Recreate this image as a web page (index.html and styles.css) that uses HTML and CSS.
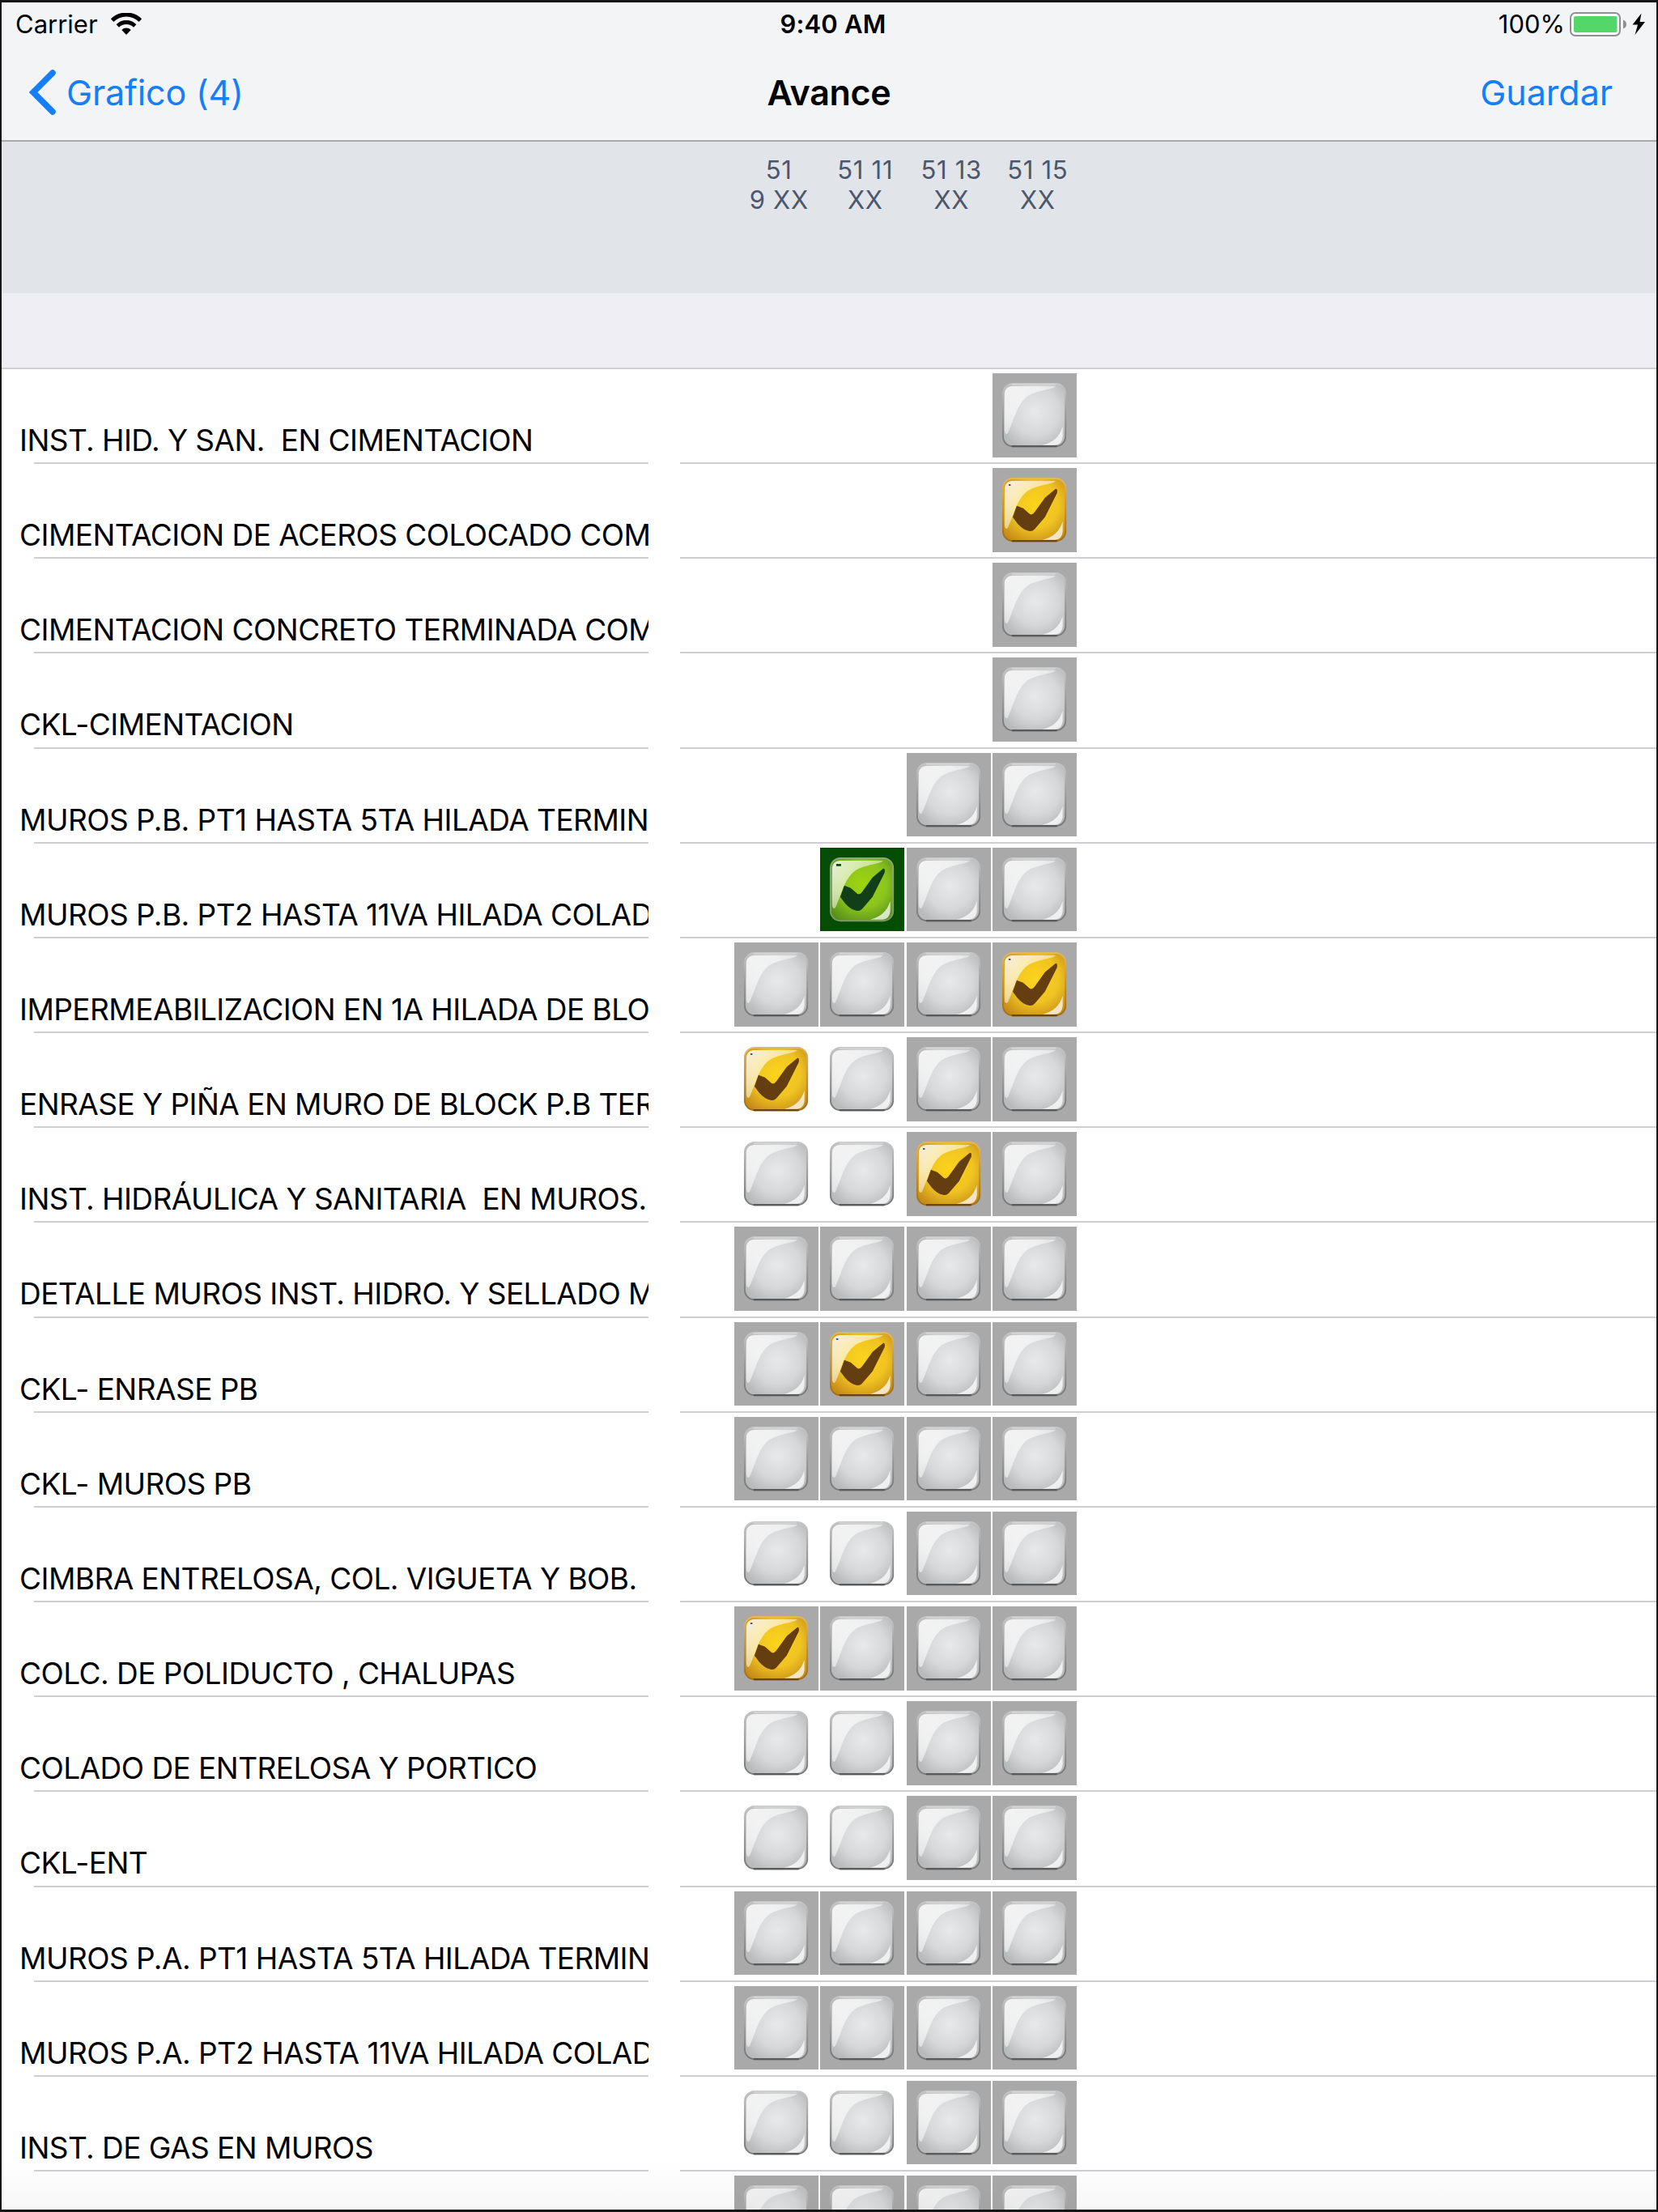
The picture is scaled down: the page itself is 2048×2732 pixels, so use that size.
FILE: index.html
```html
<!DOCTYPE html>
<html lang="es">
<head>
    <meta charset="UTF-8">
    <meta name="viewport" content="width=device-width, initial-scale=1.0">
    <title>Avance</title>
    <link rel="stylesheet" href="styles.css">
</head>
<body>
    <svg class="defs" width="0" height="0">
        <defs>
            <radialGradient id="gris" cx="0.52" cy="0.45" r="0.62">
                <stop offset="0" stop-color="#e7e9eb"/>
                <stop offset="0.6" stop-color="#d6d7d8"/>
                <stop offset="1" stop-color="#b9babb"/>
            </radialGradient>
            <radialGradient id="amarillo" cx="0.52" cy="0.42" r="0.68">
                <stop offset="0" stop-color="#fbd41c"/>
                <stop offset="0.55" stop-color="#f0c322"/>
                <stop offset="1" stop-color="#c48a18"/>
            </radialGradient>
            <radialGradient id="verde" cx="0.52" cy="0.42" r="0.68">
                <stop offset="0" stop-color="#9ed40f"/>
                <stop offset="0.55" stop-color="#8cc41e"/>
                <stop offset="1" stop-color="#558f18"/>
            </radialGradient>
            <linearGradient id="brillo" x1="0" y1="0.1" x2="0.6" y2="0.6">
                <stop offset="0" stop-color="#fff" stop-opacity="0.82"/>
                <stop offset="1" stop-color="#fff" stop-opacity="0.45"/>
            </linearGradient>
            <linearGradient id="borde" x1="0" y1="0" x2="0" y2="1">
                <stop offset="0" stop-color="#c6c6c6"/>
                <stop offset="0.5" stop-color="#9a9a9a"/>
                <stop offset="1" stop-color="#777"/>
            </linearGradient>
            <linearGradient id="bordeAmarillo" x1="0" y1="0" x2="0" y2="1">
                <stop offset="0" stop-color="#e0b860"/>
                <stop offset="1" stop-color="#a06c14"/>
            </linearGradient>
            <linearGradient id="bordeVerde" x1="0" y1="0" x2="0" y2="1">
                <stop offset="0" stop-color="#8fa878"/>
                <stop offset="1" stop-color="#7c9a60"/>
            </linearGradient>
            <g id="reflejos">
                <path d="M24 16 H78 C76 20 58 20 44 28 C31 37 27 56 20 72 C18 77 15 76 15 70 V24 Q16 17 24 16 Z" fill="url(#brillo)"/>
                <path d="M62 89 C74 86 83 80 87 66 V79 Q86 88 78 89 Z" fill="#fff" fill-opacity="0.75"/>
            </g>
            <rect id="contorno" x="13" y="13" width="77.500" height="77.500" rx="12"/>
            <path id="palomita" d="M30 47 L38 50 L46 57 Q49 59 52 55 L65 37 L78 26 Q81 25 80 31 L65 61 L52 76 Q49 79 45 78 Q38 77 31 69 L25 61 Z"/>
            <symbol id="vacio" viewBox="0 0 104 104">
                <use href="#contorno" fill="url(#gris)" stroke="url(#borde)" stroke-width="2"/>
                <use href="#reflejos"/>
                <path d="M24 14 H78" stroke="#d2d2d2" stroke-width="2.2"/>
                <path d="M24 90.500 H80" stroke="#5a5a5a" stroke-width="2.2"/>
            </symbol>
            <symbol id="pendiente" viewBox="0 0 104 104">
                <use href="#contorno" fill="url(#amarillo)" stroke="url(#bordeAmarillo)" stroke-width="2"/>
                <use href="#reflejos"/>
                <use href="#palomita" fill="#643e10"/>
                <path d="M24 90.500 H80" stroke="#6b4210" stroke-width="2.2"/>
                <path d="M20 21h2.500" stroke="#555" stroke-width="2"/>
            </symbol>
            <symbol id="listo" viewBox="0 0 104 104">
                <use href="#contorno" fill="url(#verde)" stroke="url(#bordeVerde)" stroke-width="2"/>
                <use href="#reflejos"/>
                <use href="#palomita" fill="#123f18"/>
                <path d="M20 21.500h6" stroke="#054d05" stroke-width="2.6"/>
            </symbol>
        </defs>
    </svg>

    <div class="pantalla">
        <div class="estado">
            <div class="estado-izq">
                <span class="operador">Carrier</span>
                <svg class="wifi" viewBox="0 0 38 28">
                    <path d="M1.6 9.2 A24.5 24.5 0 0 1 36.4 9.2" fill="none" stroke="#000" stroke-width="5"/>
                    <path d="M8.3 16 A15 15 0 0 1 29.7 16" fill="none" stroke="#000" stroke-width="4.8"/>
                    <path d="M13.3 21 A8 8 0 0 1 24.7 21 L19 27 Z" fill="#000"/>
                </svg>
            </div>
            <div class="hora">9:40 AM</div>
            <div class="estado-der">
                <span class="carga">100%</span>
                <svg class="bateria" viewBox="0 0 94 30">
                    <rect x="1" y="1" width="61" height="28" rx="6" fill="#fff" stroke="#8e8f91" stroke-width="2"/>
                    <rect x="5" y="5" width="53.500" height="20" rx="2" fill="#53d769"/>
                    <path d="M66 9.5 Q70 11 70 15 Q70 19 66 20.500 Z" fill="#8e8f91"/>
                    <path d="M88.500 1.500 L77.500 15.500 H84 L80.500 28 L93 12 H86.500 Z" fill="#000"/>
                </svg>
            </div>
        </div>

        <div class="barra">
            <a class="atras" href="#">
                <svg class="flecha" viewBox="0 0 34 58">
                    <path d="M29 5 L5 29 L29 53" fill="none" stroke="#147efb" stroke-width="7.500" stroke-linecap="round" stroke-linejoin="miter"/>
                </svg>
                <span>Grafico (4)</span>
            </a>
            <h1>Avance</h1>
            <a class="guardar" href="#">Guardar</a>
        </div>

        <div class="encabezado">
            <div class="lote">51<br>9 XX</div>
            <div class="lote">51 11<br>XX</div>
            <div class="lote">51 13<br>XX</div>
            <div class="lote">51 15<br>XX</div>
        </div>
        <div class="seccion"></div>

        <div id="tabla"></div>
        <div class="sombra"></div>
    </div>

    <script>
        // . = sin celda, g = gris vacio, w = blanco vacio, y/Y = amarillo (gris/blanco), v = verde
        const partidas = [
            ["INST. HID. Y SAN.  EN CIMENTACION", "...g"],
            ["CIMENTACION DE ACEROS COLOCADO COM", "...y"],
            ["CIMENTACION CONCRETO TERMINADA COM", "...g"],
            ["CKL-CIMENTACION", "...g"],
            ["MUROS P.B. PT1 HASTA 5TA HILADA TERMIN", "..gg"],
            ["MUROS P.B. PT2 HASTA 11VA HILADA COLAD", ".vgg"],
            ["IMPERMEABILIZACION EN 1A HILADA DE BLO", "gggy"],
            ["ENRASE Y PIÑA EN MURO DE BLOCK P.B TER", "Ywgg"],
            ["INST. HIDRÁULICA Y SANITARIA  EN MUROS.", "wwyg"],
            ["DETALLE MUROS INST. HIDRO. Y SELLADO M", "gggg"],
            ["CKL- ENRASE PB", "gygg"],
            ["CKL- MUROS PB", "gggg"],
            ["CIMBRA ENTRELOSA, COL. VIGUETA Y BOB.", "wwgg"],
            ["COLC. DE POLIDUCTO , CHALUPAS", "yggg"],
            ["COLADO DE ENTRELOSA Y PORTICO", "wwgg"],
            ["CKL-ENT", "wwgg"],
            ["MUROS P.A. PT1 HASTA 5TA HILADA TERMIN", "gggg"],
            ["MUROS P.A. PT2 HASTA 11VA HILADA COLAD", "gggg"],
            ["INST. DE GAS EN MUROS", "wwgg"],
            ["", "gggg"]
        ];

        const celdas = {
            ".": ["", ""],
            "g": ["gris", "vacio"],
            "w": ["blanca", "vacio"],
            "y": ["gris", "pendiente"],
            "Y": ["blanca", "pendiente"],
            "v": ["verde", "listo"]
        };

        const tabla = document.getElementById("tabla");

        partidas.forEach(([nombre, estados]) => {
            let html = "";
            for (const e of estados) {
                const [fondo, icono] = celdas[e];
                html += `<div class="celda ${fondo}">`;
                if (icono) {
                    html += `<svg viewBox="0 0 104 104"><use href="#${icono}"/></svg>`;
                }
                html += "</div>";
            }
            const fila = document.createElement("div");
            fila.className = "fila";
            fila.innerHTML = `<div class="nombre"><span>${nombre}</span></div><div class="avance">${html}</div>`;
            tabla.appendChild(fila);
        });
    </script>
</body>
</html>
```
FILE: styles.css
```css
* {
    box-sizing: border-box;
}

body {
    margin: 0;
    background-color: #fff;
    color: #000;
    font-family: Inter, "Liberation Sans", sans-serif;
}

.defs {
    position: absolute;
}

.pantalla {
    position: relative;
    width: 2048px;
    height: 2732px;
    border: 3px solid #161616;
    border-left-width: 2px;
    border-right-width: 2px;
    overflow: hidden;
}

/* Barra de estado */
.estado {
    display: grid;
    grid-template-columns: 1fr auto 1fr;
    align-items: center;
    height: 54px;
    padding: 0 13px 0 17px;
    background-color: #f3f4f6;
    font-size: 31px;
    line-height: 54px;
}

.estado-izq,
.estado-der {
    display: flex;
    align-items: center;
}

.estado-der {
    justify-content: flex-end;
}

.wifi {
    width: 38px;
    height: 28px;
    margin-left: 16px;
}

.hora {
    padding-left: 6px;
    font-weight: 600;
    letter-spacing: 0.2px;
}

.bateria {
    width: 94px;
    height: 30px;
    margin-left: 6px;
}

/* Barra de navegacion */
.barra {
    display: grid;
    grid-template-columns: 1fr auto 1fr;
    align-items: center;
    height: 118px;
    padding: 0 54px 2px;
    background-color: #f3f4f6;
    border-bottom: 2px solid #a9abb0;
    font-size: 43px;
}

.barra a {
    color: #147efb;
    text-decoration: none;
}

.atras {
    display: flex;
    align-items: center;
    margin-left: -20px;
    letter-spacing: -0.15px;
}

.flecha {
    width: 34px;
    height: 58px;
    margin-right: 12px;
}

.barra h1 {
    margin: 0;
    font-size: 43px;
    font-weight: 600;
    letter-spacing: -0.3px;
}

.guardar {
    text-align: right;
}

/* Encabezado con los lotes */
.encabezado {
    display: flex;
    height: 187px;
    padding: 16px 0 0 907px;
    background-color: #e1e4e9;
    color: #4c566c;
    font-size: 31px;
    line-height: 37.3px;
    letter-spacing: 0.7px;
}

.lote {
    width: 106.5px;
    text-align: center;
}

.seccion {
    height: 94px;
    background-color: #efeef4;
    border-bottom: 2px solid #cfcfd3;
}

/* Tabla de partidas */
.fila {
    display: flex;
    gap: 39px;
    height: 117.17px;
    padding-left: 22px;
}

.nombre {
    position: relative;
    width: 777px;
    padding-top: 66px;
    overflow: hidden;
    font-size: 37px;
    line-height: 44px;
    letter-spacing: -0.54px;
    white-space: pre;
}

.nombre::after {
    content: "";
    position: absolute;
    left: 18px;
    right: 0;
    bottom: 0;
    height: 2px;
    background-color: #cfcfd3;
}

.avance {
    display: flex;
    flex: 1;
    gap: 2.9px;
    padding: 5px 0 0 67px;
    border-bottom: 2px solid #cfcfd3;
}

.celda {
    width: 103.6px;
    height: 103.6px;
}

.celda svg {
    display: block;
    width: 100%;
    height: 100%;
}

.gris {
    background-color: #a9a9a9;
}

.verde {
    background-color: #054d05;
}

.sombra {
    position: absolute;
    left: 0;
    right: 0;
    bottom: 0;
    height: 60px;
    background: linear-gradient(rgba(0, 0, 0, 0), rgba(0, 0, 0, 0.03));
}
```
